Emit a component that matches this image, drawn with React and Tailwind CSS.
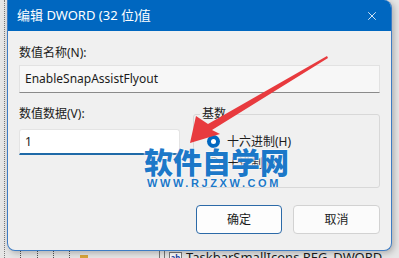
import { X } from 'lucide-react'

const font = "font-['Segoe_UI','Noto_Sans','Noto_Sans_CJK_SC',sans-serif]"

function Radio({ checked, label }) {
  return (
    <div className="flex items-center gap-[7px]">
      <span
        className={
          checked
            ? 'flex h-[13px] w-[13px] items-center justify-center rounded-full bg-[#0067c0]'
            : 'h-[13px] w-[13px] rounded-full border border-[#8a8a8a] bg-[#f6f6f6]'
        }
      >
        {checked && <span className="h-[5px] w-[5px] rounded-full bg-white"></span>}
      </span>
      <span className="text-[12px] leading-none text-[#1b1b1b]">{label}</span>
    </div>
  )
}

export default function App() {
  return (
    <div className={`relative h-[258px] w-[399px] overflow-hidden bg-[#e6e6e6] ${font}`}>
      {/* registry editor behind the dialog */}
      <div className="absolute left-[4px] top-0 h-full border-l border-dotted border-[#7a7a7a]"></div>

      <div className="relative z-10 flex">
        <div className="ml-[7px] flex h-[251px] w-[385px] flex-col overflow-hidden rounded-b-[8px] rounded-tr-[8px] border-b border-l border-r border-[#3d7cc4] bg-[#f0f0f0] shadow-[2px_2px_6px_rgba(0,0,0,0.25)]">
          <div className="flex h-[31px] shrink-0 items-center justify-between bg-[#0067c0] pl-[9px] pr-[12px]">
            <span className="text-[13px] text-white">编辑 DWORD (32 位)值</span>
            <X className="h-[14px] w-[14px] text-white" strokeWidth={1.4} />
          </div>

          <div className="flex flex-col px-[11px] pt-[15px]">
            <span className="text-[12px] leading-[13px] text-[#1b1b1b]">数值名称(N):</span>
            <div className="mt-[6px] flex h-[28px] items-center border border-b-[#8a8a8a] border-[#e2e2e2] bg-[#f7f7f7] pl-[5px] text-[12px] text-[#1b1b1b]">
              EnableSnapAssistFlyout
            </div>

            <div className="mt-[14px] flex">
              <div className="flex w-[161px] flex-col">
                <span className="text-[12px] leading-[13px] text-[#1b1b1b]">数值数据(V):</span>
                <div className="mt-[9px] flex h-[26px] items-center rounded-t-[3px] border border-[#e4e4e4] border-b-2 border-b-[#1f6aa8] bg-white pl-[5px] text-[12px] text-[#1b1b1b]">
                  1
                </div>
              </div>

              <div className="relative ml-[13px] mt-[7px] h-[74px] flex-1 rounded-[3px] border border-[#d8d8d8]">
                <span className="absolute left-[6px] top-[-8px] bg-[#f0f0f0] px-[2px] text-[12px] leading-[14px] text-[#1b1b1b]">
                  基数
                </span>
                <div className="flex flex-col gap-[9px] pl-[13px] pt-[20px]">
                  <Radio checked label="十六进制(H)" />
                  <Radio label="十进制(D)" />
                </div>
              </div>
            </div>

            <div className="mt-[17px] flex justify-end gap-[11px]">
              <button className="h-[29px] w-[86px] rounded-[4px] border border-[#2c6aa8] bg-[#fdfdfd] text-[12px] text-[#1b1b1b]">
                确定
              </button>
              <button className="h-[29px] w-[87px] rounded-[4px] border border-[#d2d2d2] bg-[#fbfbfb] text-[12px] text-[#1b1b1b]">
                取消
              </button>
            </div>
          </div>
        </div>
      </div>

      <div className="relative flex h-[7px] items-start">
        <div className="ml-[20px] h-full border-l border-dotted border-[#555]"></div>
        <div className="ml-[16px] h-full border-l border-dotted border-[#555]"></div>
        <div className="ml-[15px] h-full border-l border-dotted border-[#555]"></div>
        <div className="ml-[15px] h-full border-l border-dotted border-[#555]"></div>
        <div className="ml-[10px] mt-[4px] h-[3px] w-[8px] bg-[#d9a53b]"></div>
        <div className="ml-[71px] h-full border-l border-[#777]"></div>
        <div className="ml-[4px] h-full border-l border-[#777]"></div>
        <div className="ml-[4px] mt-[1px] flex h-[12px] w-[13px] items-start justify-center border border-[#7a7a7a] bg-white text-[8px] font-bold leading-[10px] text-[#1f3f9f]">
          ab
        </div>
        <span className="ml-[4px] mt-[-1px] text-[13px] leading-[14px] text-[#1b1b1b]">TaskbarSmallIcons REG_DWORD</span>
      </div>

      {/* watermark */}
      <div className="absolute left-[144px] top-[144px] z-20 flex flex-col items-start">
        <span className="font-['Noto_Sans_CJK_SC',sans-serif] text-[length:29px] font-black leading-[34px] text-[#1c78c8] [text-shadow:0_0_2px_#fff,0_0_2px_#fff]">
          软件自学网
        </span>
        <span className="ml-[3px] font-['Liberation_Sans',sans-serif] text-[length:11px] font-bold leading-[11px] tracking-[2.6px] text-[#1c78c8] [text-shadow:0_0_2px_#fff]">
          WWW.RJZXW.COM
        </span>
      </div>

      {/* red arrow */}
      <svg className="absolute left-0 top-0 z-30" width="399" height="258" viewBox="0 0 399 258">
        <path d="M327 56 L208 124 L196 116 L190 143 L220 134 L212 130 L328 58 Z" fill="#e83a3e" />
      </svg>
    </div>
  )
}
